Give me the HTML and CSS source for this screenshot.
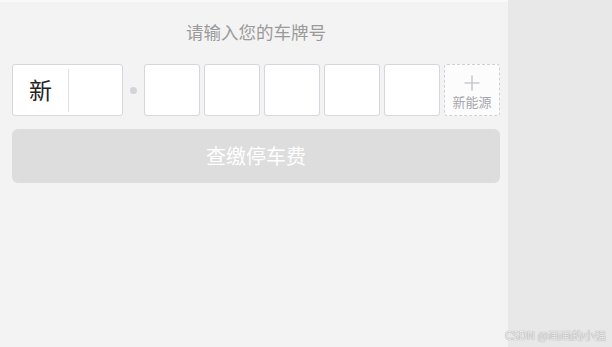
FILE: index.html
```html
<!DOCTYPE html>
<html lang="zh-CN">
<head>
<meta charset="utf-8">
<title>请输入您的车牌号</title>
<link rel="stylesheet" href="styles.css">
</head>
<body>
<div class="page">
  <main class="panel">
    <div class="title">请输入您的车牌号</div>
    <div class="plate-row">
      <div class="cell cell-province">
        <span class="province">新</span>
        <span class="divider"></span>
        <span class="letter"></span>
      </div>
      <span class="dot"></span>
      <div class="cells">
        <div class="cell"></div>
        <div class="cell"></div>
        <div class="cell"></div>
        <div class="cell"></div>
        <div class="cell"></div>
        <div class="cell cell-new">
          <svg class="plus" width="16" height="16" viewBox="0 0 16 16" aria-hidden="true">
            <path d="M8 0.5V15.5M0.5 8H15.5" stroke="#c9c9d1" stroke-width="1.6" fill="none"/>
          </svg>
          <span class="new-label">新能源</span>
        </div>
      </div>
    </div>
    <button class="submit" type="button">查缴停车费</button>
  </main>
  <aside class="side"></aside>
  <div class="watermark">CSDN @画画的小强</div>
</div>
</body>
</html>
```
FILE: styles.css
```css
html, body {
  margin: 0;
  padding: 0;
}
body {
  font-family: "Noto Sans CJK SC", "Noto Sans", "Liberation Sans", sans-serif;
  background: #e8e8e8;
}
.page {
  position: relative;
  display: flex;
  width: 612px;
  height: 347px;
  overflow: hidden;
}
.panel {
  width: 508px;
  box-sizing: border-box;
  padding: 0 8px 0 12px;
  background: #f3f3f3;
  border-top: 2px solid #f9f9f9;
  display: flex;
  flex-direction: column;
}
.side {
  flex: 1;
  background: #e8e8e8;
}
.title {
  margin-top: 18px;
  height: 24px;
  line-height: 24px;
  font-size: 17.5px;
  color: #9a9a9a;
  text-align: center;
}
.plate-row {
  margin-top: 20px;
  display: flex;
  align-items: center;
  height: 52px;
}
.cell {
  box-sizing: border-box;
  width: 56px;
  height: 52px;
  background: #fff;
  border: 1px solid #d6d6dd;
  border-radius: 3px;
}
.cell-province {
  width: 112px;
  display: flex;
  align-items: center;
}
.province {
  width: 55px;
  text-align: center;
  font-size: 23px;
  color: #222;
  line-height: 1;
  padding-bottom: 2px;
}
.divider {
  width: 1px;
  height: 43px;
  margin-top: 1px;
  background: #e2e2e6;
}
.letter {
  flex: 1;
}
.dot {
  width: 7px;
  height: 7px;
  border-radius: 50%;
  background: #d3d3da;
  margin: 0 7px 0 7px;
}
.cells {
  display: flex;
  gap: 4px;
}
.cell-new {
  background: #fcfcfc;
  border: 1px dashed #cfcfd4;
  display: flex;
  flex-direction: column;
  align-items: center;
  padding-top: 10px;
}
.plus {
  display: block;
}
.new-label {
  margin-top: 4px;
  font-size: 13px;
  line-height: 14px;
  color: #a6a6ae;
}
.submit {
  margin-top: 13px;
  height: 54px;
  border: none;
  border-radius: 6px;
  background: #dddddd;
  color: #ffffff;
  font-family: inherit;
  font-size: 20px;
  padding: 0;
  line-height: 54px;
}
.watermark {
  position: absolute;
  right: 6px;
  bottom: 5px;
  font-size: 11.5px;
  line-height: 14px;
  color: #eeeeee;
  text-shadow: 0 0 1px rgba(0, 0, 0, 0.5);
}
```
